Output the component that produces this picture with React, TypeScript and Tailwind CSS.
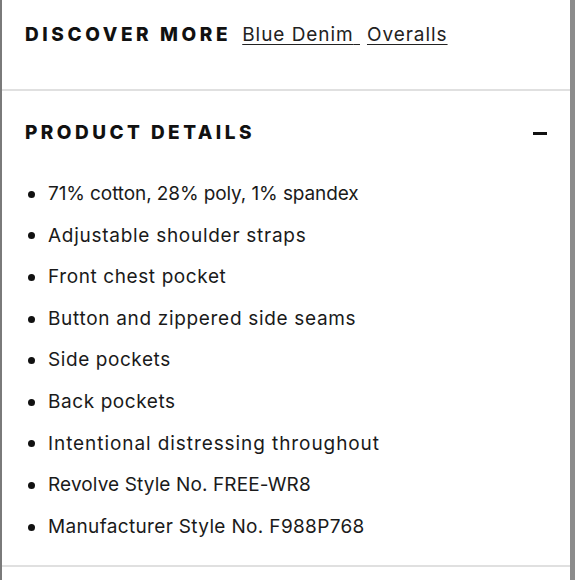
import React from "react";

const items: { t: string; c: string }[] = [
  { t: "71% cotton, 28% poly, 1% spandex", c: "tracking-[-0.1px]" },
  { t: "Adjustable shoulder straps", c: "tracking-[0.72px]" },
  { t: "Front chest pocket", c: "tracking-[0.6px]" },
  { t: "Button and zippered side seams", c: "tracking-[0.68px]" },
  { t: "Side pockets", c: "tracking-[0.58px]" },
  { t: "Back pockets", c: "tracking-[0.58px]" },
  { t: "Intentional distressing throughout", c: "tracking-[0.92px]" },
  { t: "Revolve Style No. FREE-WR8", c: "tracking-[0.12px]" },
  { t: "Manufacturer Style No. F988P768", c: "tracking-[0.34px]" },
];

export default function App() {
  return (
    <div className="w-[580px] h-[580px] bg-white overflow-hidden">
      <div className="w-[575px] h-[580px] border-l-2 border-r-[5px] border-l-[#7a7a7a] border-r-[#8c8c8c] bg-white">
        <div className="h-[89px] pt-[23px] pl-[23px] flex items-baseline">
          <h2 className="font-['Inter',sans-serif] font-extrabold text-[19px] leading-[24px] tracking-[3.6px] text-[#111]">
            DISCOVER MORE
          </h2>
          <div className="ml-[11px] flex items-baseline font-['Inter',sans-serif] text-[19px] leading-[24px] text-[#222] tracking-[0.95px]">
            <a className="underline underline-offset-[3px] decoration-1">Blue Denim{"\u00a0"}</a>
            <a className="ml-[7px] underline underline-offset-[3px] decoration-1">Overalls</a>
          </div>
        </div>
        <div className="h-[2px] bg-[#e0e0e0]" />
        <div className="pt-[30px] pl-[23px] pr-[23px] flex items-center justify-between">
          <h2 className="font-['Inter',sans-serif] font-extrabold text-[19px] leading-[24px] tracking-[3.45px] text-[#111]">
            PRODUCT DETAILS
          </h2>
          <div className="w-[14px] h-[3px] bg-[#111]" />
        </div>
        <ul className="mt-[28px] pb-[18px] font-['Inter',sans-serif] text-[19px] leading-[41.6px] text-[#1a1a1a]">
          {items.map((it) => (
            <li key={it.t} className="flex items-center">
              <span className="ml-[26px] w-[7px] h-[7px] rounded-full bg-[#111] mt-[1px]" />
              <span className={"ml-[13px] " + it.c}>{it.t}</span>
            </li>
          ))}
        </ul>
        <div className="h-[2px] bg-[#e0e0e0]" />
      </div>
    </div>
  );
}
